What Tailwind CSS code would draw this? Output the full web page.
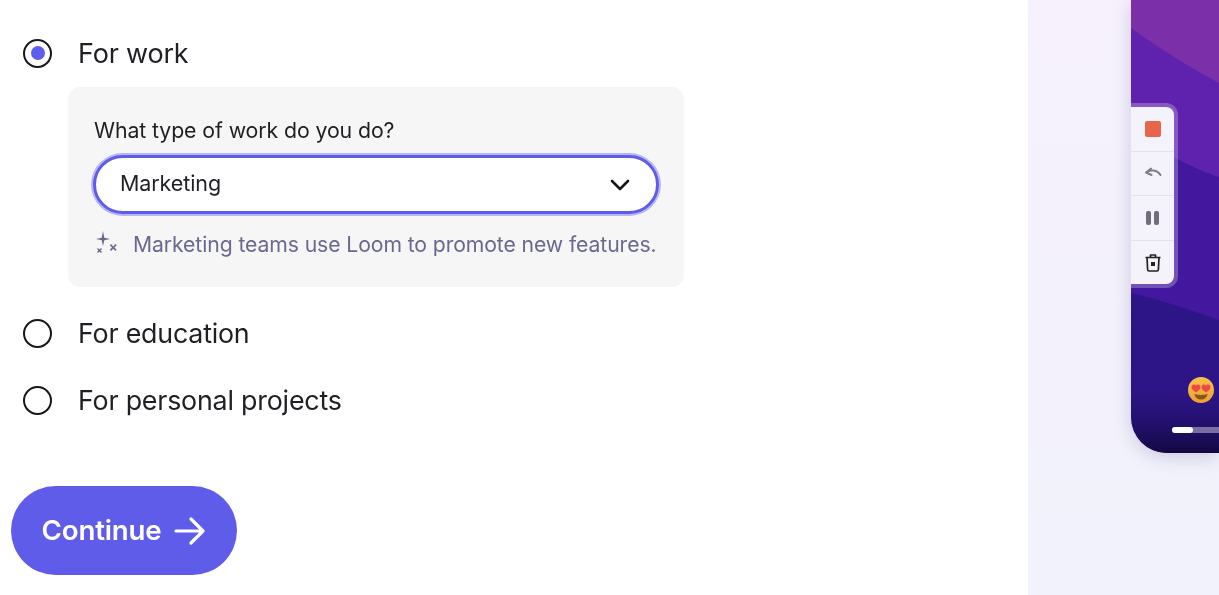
<!DOCTYPE html>
<html lang="en">
<head>
    <meta charset="UTF-8">
    <meta name="viewport" content="width=device-width, initial-scale=1.0">
    <title>Loom onboarding</title>
    <script src="https://cdn.jsdelivr.net/npm/@tailwindcss/browser@4"></script>
</head>
<body class="bg-white overflow-hidden">
    <div class="flex h-[595px] w-[1219px] blur-[0.6px] font-['Inter',sans-serif] text-[#1f1f24]">

        <!-- left form -->
        <div class="w-[1028px] shrink-0 pt-[35px] pl-[11px]">
            <div class="flex items-center h-9 pl-3 gap-[26px]">
                <span class="w-[29px] h-[29px] rounded-full border-[2.5px] border-[#18181c] flex items-center justify-center">
                    <span class="w-[14px] h-[14px] rounded-full bg-[#5f5cf0]"></span>
                </span>
                <span class="text-[27px] tracking-[-0.2px] pt-[2px]">For work</span>
            </div>

            <div class="ml-[57px] mt-4 w-[616px] h-[200px] rounded-xl bg-[#f6f6f6] px-[25px] pt-[30px]">
                <p class="text-[21.300px] leading-[26px] tracking-[-0.1px] pl-[1px] whitespace-nowrap">What type of work do you do?</p>
                <div class="mt-[12px] h-[59px] rounded-full border-[3px] border-[#5f5cea] ring-2 ring-[#8f8cf5]/60 bg-white flex items-center justify-between pl-6 pr-[25px]">
                    <span class="text-[21.500px] tracking-[-0.1px] pb-[2px]">Marketing</span>
                    <svg width="22" height="14" viewBox="0 0 22 14" fill="none" stroke="#18181c" stroke-width="2.6" stroke-linecap="round" stroke-linejoin="round"><path d="M3 3l8 8 8-8"/></svg>
                </div>
                <div class="mt-[15px] flex items-center gap-[15px] text-[#6b6890]">
                    <svg class="-mt-[3px]" width="25" height="26" viewBox="0 0 25 26" fill="#6b6890">
                        <path d="M10 1l1.300 6.700L17 9l-5.700 1.300L10 16l-1.300-5.700L3 9l5.700-1.300z"/>
                        <path d="M18 14l2.200 2.400 2.300-2.400 1.200 1.200-2.300 2.300 2.300 2.300-1.200 1.200-2.300-2.300-2.200 2.300-1.200-1.200 2.300-2.300-2.300-2.300z"/>
                        <path d="M5 18l1.500 1.500L8 18l1 1-1.500 1.500L9 22l-1 1-1.500-1.500L5 23l-1-1 1.500-1.500L4 19z"/>
                    </svg>
                    <span class="text-[21.200px] tracking-[-0.1px] whitespace-nowrap">Marketing teams use Loom to promote new features.</span>
                </div>
            </div>

            <div class="flex items-center h-9 pl-3 gap-[26px] mt-[28px]">
                <span class="w-[29px] h-[29px] rounded-full border-[2.5px] border-[#18181c]"></span>
                <span class="text-[26.800px] tracking-[-0.2px]">For education</span>
            </div>
            <div class="flex items-center h-9 pl-3 gap-[26px] mt-[31px]">
                <span class="w-[29px] h-[29px] rounded-full border-[2.5px] border-[#18181c]"></span>
                <span class="text-[26.800px] tracking-[-0.2px]">For personal projects</span>
            </div>

            <button class="mt-[68px] w-[226px] h-[89px] rounded-full bg-[#5f5cea] text-white flex items-center justify-center gap-[13px] text-[27.700px] font-semibold tracking-[-0.2px]">
                Continue
                <svg width="32" height="30" viewBox="0 0 32 30" fill="none" stroke="#fff" stroke-width="3.2" stroke-linecap="round" stroke-linejoin="round"><path d="M2 15h27M17 3l12 12-12 12"/></svg>
            </button>
        </div>

        <!-- right preview -->
        <div class="flex-1 h-full pl-[103px] bg-gradient-to-b from-[#f6f1fd] to-[#f1f2fb]">
            <div class="relative h-[453px] rounded-bl-[36px] overflow-hidden shadow-[0_4px_18px_rgba(70,60,130,0.22)]">
                <svg class="absolute inset-0" width="88" height="453" viewBox="0 0 88 453">
                    <defs>
                        <linearGradient id="fade" x1="0" y1="0" x2="0" y2="1">
                            <stop offset="0" stop-color="#2d1588" stop-opacity="0"/>
                            <stop offset="1" stop-color="#120840"/>
                        </linearGradient>
                    </defs>
                    <rect width="88" height="453" fill="#2d1588"/>
                    <path d="M0 0h88v320C60 310 30 300 0 293z" fill="#43189e"/>
                    <path d="M0 0h88v177C60 168 30 150 0 135z" fill="#5f22ae"/>
                    <path d="M0 0h88v83C60 68 30 50 0 28z" fill="#7b2fa8"/>
                    <rect y="375" width="88" height="78" fill="url(#fade)"/>
                </svg>

                <!-- recorder toolbar -->
                <div class="absolute top-[103px] left-0 w-[47px] h-[185px] rounded-r-xl bg-white/25 p-[4px] pl-0">
                    <div class="h-full rounded-r-lg bg-[#f4f2fb] flex flex-col divide-y divide-[#e3e1ec]">
                        <div class="flex-1 flex items-center justify-center">
                            <span class="w-4 h-4 rounded-[2px] bg-[#e8654a]"></span>
                        </div>
                        <div class="flex-1 flex items-center justify-center">
                            <svg width="18" height="12" viewBox="0 0 18 12" fill="none" stroke="#7d7d8c" stroke-width="2" stroke-linecap="round" stroke-linejoin="round"><path d="M7 1.500L2 5.500l5.500 2.500M2 5.500C6 2.500 13 2.500 16.500 8"/></svg>
                        </div>
                        <div class="flex-1 flex items-center justify-center gap-[3px]">
                            <span class="w-[5px] h-[14px] rounded-[2px] bg-[#6f6f7c]"></span>
                            <span class="w-[5px] h-[14px] rounded-[2px] bg-[#6f6f7c]"></span>
                        </div>
                        <div class="flex-1 flex items-center justify-center">
                            <svg width="16" height="19" viewBox="0 0 16 19" fill="none" stroke="#222" stroke-width="1.700" stroke-linejoin="round"><path d="M.5 4.500h15M5.500 4.500V2h5v2.500M2 4.500l.6 12a1.500 1.500 0 001.500 1.500h7.800a1.500 1.500 0 001.500-1.500l.6-12"/><rect x="6" y="9" width="4" height="4" fill="#222" stroke="none"/></svg>
                        </div>
                    </div>
                </div>

                <!-- reaction and progress -->
                <svg class="absolute left-[57px] top-[377px]" width="26" height="26" viewBox="0 0 26 26">
                    <defs>
                        <linearGradient id="face" x1="0" y1="0" x2="0" y2="1">
                            <stop offset="0" stop-color="#f8c24a"/>
                            <stop offset="1" stop-color="#eda032"/>
                        </linearGradient>
                    </defs>
                    <circle cx="13" cy="13" r="13" fill="url(#face)"/>
                    <path d="M6.500 17c4 1.200 9 1.200 13 0-.5 3.500-3 5.500-6.500 5.500s-6-2-6.500-5.500z" fill="#8a5320"/>
                    <path d="M8 15.500C5 13.500 3.500 12 3.500 10c0-2.800 3.300-3.300 4.500-1.200C9.200 6.700 12.500 7.200 12.500 10c0 2-1.500 3.500-4.500 5.500z" fill="#ee4a45"/>
                    <path d="M18 15.500c-3-2-4.500-3.500-4.500-5.500 0-2.800 3.300-3.300 4.500-1.200 1.200-2.100 4.500-1.600 4.500 1.200 0 2-1.500 3.500-4.500 5.500z" fill="#ee4a45"/>
                </svg>
                <div class="absolute left-[41px] top-[427px] w-full h-[6px] rounded-full bg-white/40">
                    <div class="w-[21px] h-full rounded-full bg-white"></div>
                </div>
            </div>
        </div>
    </div>
</body>
</html>
